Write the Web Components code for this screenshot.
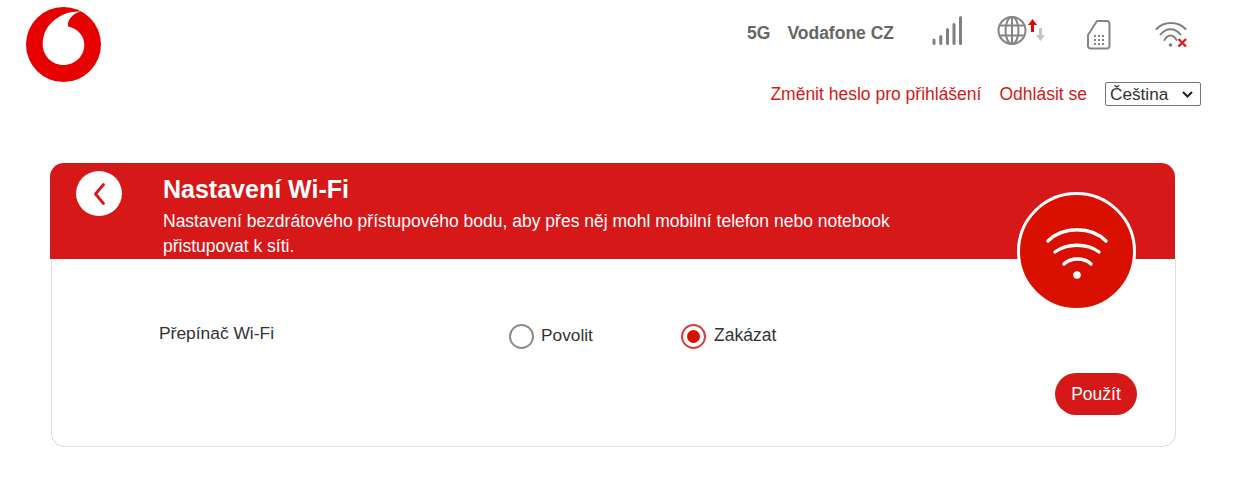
<!DOCTYPE html>
<html lang="cs"><head><meta charset="utf-8"><title>Nastavení Wi-Fi</title>
<style>
html,body{margin:0;padding:0;background:#fff;font-family:"Liberation Sans",Arial,sans-serif;}
</style></head><body>
<app-page>
  <top-bar slot="top"></top-bar>
  <settings-card title-text="Nastavení Wi-Fi" desc="Nastavení bezdrátového přístupového bodu, aby přes něj mohl mobilní telefon nebo notebook přistupovat k síti.">
    <switch-row label="Přepínač Wi-Fi"></switch-row>
    <div style="display:flex;justify-content:flex-end;padding:23px 38px 0 0"><red-button>Použít</red-button></div>
  </settings-card>
</app-page>
<script>
function def(name, html){
  customElements.define(name, class extends HTMLElement{
    constructor(){super();this.attachShadow({mode:'open'});}
    connectedCallback(){this.shadowRoot.innerHTML=typeof html==='function'?html(this):html;}
  });
}
def('app-page',`<style>:host{display:block;width:1241px;height:489px;overflow:hidden;color:#333}
.main{padding:0 66px 0 50px}</style><slot name="top"></slot><div class="main"><slot></slot></div>`);

def('top-bar',`<style>
:host{display:block;height:163px;box-sizing:border-box;padding:7px 40px 0 26px}
.wrap{display:flex;justify-content:space-between;align-items:flex-start}
.logo{width:75px;height:75px;display:block;flex:none}
.right{display:flex;flex-direction:column;align-items:flex-end}
.status{display:flex;align-items:center;height:50px;margin:1px 14px 0 0;color:#666;font-size:17.5px;font-weight:700}
.n5{margin-right:17px;line-height:20px}
.op{margin-right:36px;line-height:20px}
svg{display:block;flex:none}
.links{display:flex;align-items:center;margin-top:24px;font-size:17.5px;color:#d21a1a;line-height:24px}
.links a{color:inherit;text-decoration:none}
.links a+a{margin-left:18px}
.sel{position:relative;margin-left:18px;width:96px;height:24px}
select{appearance:none;-webkit-appearance:none;display:block;width:96px;height:24px;font:17.2px "Liberation Sans",Arial,sans-serif;color:#333;background:#fff;border:1px solid #767676;border-radius:2px;padding:0 0 0 4px;box-sizing:border-box}
.sel svg{position:absolute;right:8px;top:9px;pointer-events:none}
</style>
<div class="wrap">
<svg class="logo" viewBox="0 0 75 75"><circle cx="37.5" cy="37.5" r="37.5" fill="#e60000"/>
<path d="M55 4.500C46 4 38 6 32 10.500 22 17 16.700 26 16.700 37 16.700 49 26 58 37.500 58 49 58 58.300 49 58.300 38 58.300 29 52 21.500 42 19.500 41 13 47 6 55 4.500Z" fill="#fff"/>
</svg>
<div class="right">
<div class="status"><span class="n5">5G</span><span class="op">Vodafone CZ</span>
<svg width="33" height="34" viewBox="0 0 33 34" style="margin-right:34px"><g stroke="#808080" stroke-width="3" stroke-linecap="round" fill="none"><path d="M4 24V27.500"/><path d="M10.800 20.500V27.500"/><path d="M17.500 13.500V27.500"/><path d="M24 8.500V27.500"/><path d="M30.500 1.500V27.500"/></g></svg>
<svg width="48" height="34" viewBox="0 0 48 34" style="margin-right:42px"><g fill="none" stroke="#858585" stroke-width="2"><circle cx="15" cy="14.500" r="13.500"/><ellipse cx="15" cy="14.500" rx="6.500" ry="13.500"/><path d="M15 1v27M2.500 9.500h25M2.500 19.500h25"/></g>
<path d="M35.500 3l4.500 6h-3v7h-3v-7h-3z" fill="#e60000"/><path d="M42 12h3v7h3l-4.500 6-4.500-6h3z" fill="#c4c4c4"/></svg>
<svg width="24" height="30" viewBox="0 0 24 30" style="margin:4px 42px 0 0"><path d="M10 1H20a2.500 2.500 0 0 1 2.500 2.500V26a2.500 2.500 0 0 1-2.500 2.500H3.500A2.500 2.500 0 0 1 1 26V15Z" fill="none" stroke="#858585" stroke-width="2" stroke-linejoin="round"/><g fill="#858585"><rect x="7" y="15" width="2" height="2"/><rect x="11" y="15" width="2" height="2"/><rect x="15" y="15" width="2" height="2"/><rect x="7" y="19" width="2" height="2"/><rect x="11" y="19" width="2" height="2"/><rect x="15" y="19" width="2" height="2"/><rect x="7" y="23" width="2" height="2"/><rect x="11" y="23" width="2" height="2"/><rect x="15" y="23" width="2" height="2"/></g></svg>
<svg width="34" height="28" viewBox="0 0 34 28"><g fill="none" stroke="#808080" stroke-width="2" stroke-linecap="round"><path d="M3.500 10C11 2 25 2 32.500 10"/><path d="M7.500 15.500C13 8.500 22 8.500 27.500 15.500"/><path d="M11.500 21C15 15 20 15 23.500 21"/></g><circle cx="17.500" cy="26" r="1.800" fill="#808080"/><path d="M25.500 20l7.500 7.500M33 20l-7.500 7.500" stroke="#d9231e" stroke-width="2.400"/></svg>
</div>
<div class="links"><a>Změnit heslo pro přihlášení</a><a>Odhlásit se</a><div class="sel"><select><option>Čeština</option></select><svg width="11" height="7" viewBox="0 0 11 7"><path d="M1 1l4.500 4.500L10 1" fill="none" stroke="#222" stroke-width="2"/></svg></div></div>
</div></div>`);

def('settings-card',h=>`<style>
:host{display:block;position:relative;width:1125px}
.head{background:#d61818;border-radius:14px 14px 0 0;height:96px;box-sizing:border-box;padding:10px 0 0 113px;color:#fff;position:relative}
h1{margin:0;font-size:25px;line-height:32px;font-weight:700}
p{margin:4px 0 0;font-size:17.5px;line-height:25px;width:740px}
.back{position:absolute;left:26px;top:8px;width:46px;height:45px;border-radius:50%;background:#fff;display:flex;align-items:center;justify-content:center}
.badge{position:absolute;right:39px;top:29px;width:119px;height:119px;border-radius:50%;background:#d90f00;border:3px solid #fff;box-sizing:border-box;display:flex;align-items:center;justify-content:center;z-index:1}
.badge svg{margin-top:3px}
.body{height:188px;box-sizing:border-box;border:1px solid #ddd;border-top:0;border-radius:0 0 14px 14px;margin:0 -1px 0 1px}
</style>
<div class="head"><div class="back"><svg width="14" height="24" viewBox="0 0 14 24"><path d="M11.500 2.500L3.500 12l8 9.500" fill="none" stroke="#d61818" stroke-width="2.800" stroke-linecap="round" stroke-linejoin="round"/></svg></div>
<h1>${h.getAttribute('title-text')}</h1><p>${h.getAttribute('desc')}</p></div>
<div class="badge"><svg width="64" height="54" viewBox="0 0 64 54"><g fill="none" stroke="#fff" stroke-width="3.400" stroke-linecap="round"><path d="M3 15C18 0 46 0 61 15"/><path d="M10 26C22 17 42 17 54 26"/><path d="M19 38C26 31.300 39 31.300 46 38"/></g><circle cx="32" cy="49" r="3.800" fill="#fff"/></svg></div>
<div class="body"><slot></slot></div>`);

def('switch-row',h=>`<style>
:host{display:grid;grid-template-columns:350px 172px auto;align-items:center;height:91px;padding:64px 0 2px 107px;font-size:17.4px;color:#333;box-sizing:border-box}
.lab{line-height:20px;margin-bottom:6px}
</style>
<div class="lab">${h.getAttribute('label')}</div>
<radio-opt style="gap:7px;font-size:17.3px">Povolit</radio-opt><radio-opt checked>Zakázat</radio-opt>`);

def('radio-opt',`<style>
:host{display:flex;align-items:center;gap:8px;font-size:17.5px;color:#333;height:25px}
.c{width:25px;height:25px;border-radius:50%;box-sizing:border-box;border:2.500px solid #8c8c8c;background:#fff;display:flex;align-items:center;justify-content:center;flex:none}
:host([checked]) .c{border:2px solid #df3a35}
:host([checked]) .c::after{content:"";width:13px;height:13px;border-radius:50%;background:#d90f00}
</style><span class="c"></span><span style="margin-top:-2px"><slot></slot></span>`);

def('red-button',`<style>:host{display:block}
button{display:block;width:82px;height:42px;border:0;border-radius:21px;background:#d61818;color:#fff;font:17.5px "Liberation Sans",Arial,sans-serif;padding:0}
</style><button><slot></slot></button>`);
</script>
</body></html>
